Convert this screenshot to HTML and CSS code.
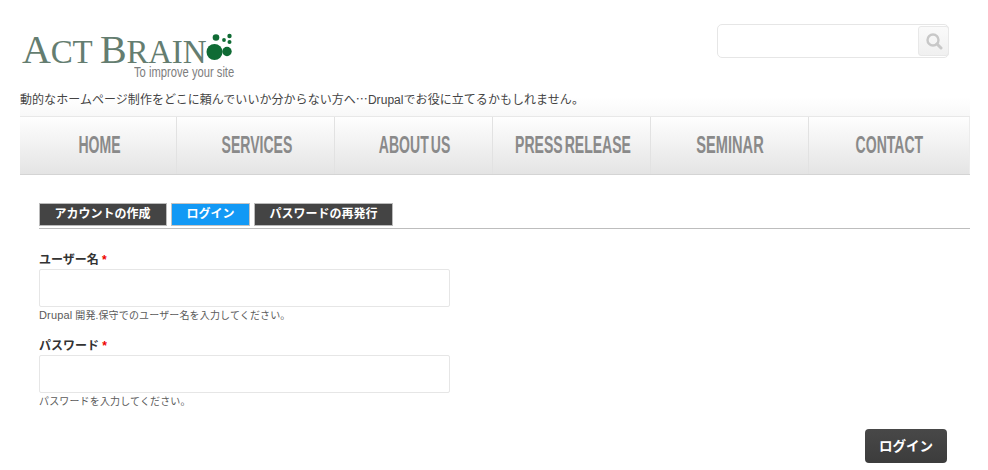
FILE: index.html
```html
<!DOCTYPE html>
<html lang="ja">
<head>
<meta charset="utf-8">
<title>ログイン</title>
<link rel="stylesheet" href="styles.css">
</head>
<body>
<div class="page">
  <header class="header">
    <div class="logo">
      <div class="logo-main">
        <span class="logo-text"><span class="cap">A</span>CT <span class="cap">B</span>RAIN</span>
        <svg class="logo-dots" width="27" height="27" viewBox="0 0 27 27">
          <circle cx="8.500" cy="19" r="8" fill="#0f6b34"/>
          <circle cx="21" cy="18.500" r="4.700" fill="#0f6b34"/>
          <circle cx="10" cy="4.500" r="3.300" fill="#0f6b34"/>
          <circle cx="18" cy="7" r="1.900" fill="#0f6b34"/>
          <circle cx="23.500" cy="3" r="2.200" fill="#0f6b34"/>
          <circle cx="23.500" cy="9" r="2" fill="#0f6b34"/>
        </svg>
      </div>
      <div class="logo-sub">To improve your site</div>
    </div>
    <form class="search">
      <button class="search-btn" type="button" aria-label="検索">
        <svg width="18" height="18" viewBox="0 0 18 18">
          <circle cx="8" cy="8" r="5.500" fill="none" stroke="#c8c8c8" stroke-width="2.400"/>
          <path d="M12 12l4 4" stroke="#c8c8c8" stroke-width="3" stroke-linecap="round"/>
        </svg>
      </button>
    </form>
  </header>
  <p class="tagline">動的なホームページ制作をどこに頼んでいいか分からない方へ<span class="ell">…</span>Drupalでお役に立てるかもしれません。</p>
  <nav class="nav">
    <a class="nav-item"><span class="nav-label">HOME</span></a>
    <a class="nav-item"><span class="nav-label">SERVICES</span></a>
    <a class="nav-item"><span class="nav-label">ABOUT US</span></a>
    <a class="nav-item"><span class="nav-label">PRESS RELEASE</span></a>
    <a class="nav-item"><span class="nav-label wide">SEMINAR</span></a>
    <a class="nav-item"><span class="nav-label">CONTACT</span></a>
  </nav>
  <main class="content">
    <ul class="tabs">
      <li class="tab">アカウントの作成</li>
      <li class="tab active">ログイン</li>
      <li class="tab">パスワードの再発行</li>
    </ul>
    <form class="form">
      <div class="field">
        <label class="label">ユーザー名 <span class="req">*</span></label>
        <input class="input" type="text">
        <div class="hint"><span class="latin">Drupal</span> 開発.保守でのユーザー名を入力してください。</div>
      </div>
      <div class="field">
        <label class="label">パスワード <span class="req">*</span></label>
        <input class="input" type="password">
        <div class="hint">パスワードを入力してください。</div>
      </div>
      <div class="actions">
        <button class="submit" type="button">ログイン</button>
      </div>
    </form>
  </main>
</div>
</body>
</html>
```
FILE: styles.css
```css
* { box-sizing: border-box; }
html, body { margin: 0; padding: 0; background: #fff; }
body {
  font-family: "Liberation Sans", "Noto Sans CJK JP", sans-serif;
  color: #444;
  height: 470px;
  overflow: hidden;
}
.page { width: 950px; margin-left: 20px; }
.header {
  height: 90px;
  display: flex;
  justify-content: space-between;
  align-items: flex-start;
}
.logo { margin: 29px 0 0 2px; width: 220px; }
.logo-main { display: flex; align-items: flex-start; height: 36px; }
.logo-text {
  font-family: "Liberation Serif", serif;
  font-size: 33px;
  line-height: 36px;
  height: 36px;
  margin-top: 3px;
  color: #647d70;
  letter-spacing: -0.2px;
  white-space: nowrap;
}
.logo-text .cap { font-size: 40px; }
.logo-dots { margin: 4px 0 0 0; }
.logo-sub {
  font-size: 14px;
  line-height: 14px;
  color: #7d7d7d;
  margin: 0 0 0 112px;
  white-space: nowrap;
  transform: scaleX(0.8);
  transform-origin: left center;
}
.search {
  width: 232px;
  height: 34px;
  margin: 24px 21px 0 0;
  border: 1px solid #e6e6e6;
  border-radius: 5px;
  background: #fff;
  display: flex;
  justify-content: flex-end;
  align-items: flex-start;
}
.search-btn {
  width: 31px;
  height: 30px;
  margin: 1px -1px 0 0;
  padding: 0;
  border: 1px solid #e8e8e8;
  border-radius: 3px;
  background: linear-gradient(#fafafa, #f0f0f0);
  display: flex;
  align-items: center;
  justify-content: center;
}
.tagline {
  margin: 0;
  height: 17px;
  font-size: 12px;
  line-height: 18px;
  letter-spacing: 0.05px;
  color: #444;
  white-space: nowrap;
  position: relative;
  z-index: 1;
}
.ell { font-family: "Noto Sans CJK JP", sans-serif; }
.nav {
  height: 59px;
  margin-top: 9px;
  display: flex;
  border-top: 1px solid #e8e8e8;
  border-bottom: 1px solid #d4d4d4;
  background: linear-gradient(#fefefe, #e4e4e4);
  position: relative;
}
.nav::before {
  content: "";
  position: absolute;
  left: 0;
  right: 0;
  top: -20px;
  height: 19px;
  background: linear-gradient(#fff, #f8f8f8);
}
.nav-item {
  width: 158px;
  padding: 0 0 1px 2px;
  display: flex;
  align-items: center;
  justify-content: center;
  border-right: 1px solid #e2e2e2;
}
.nav-item:first-child { width: 157px; }
.nav-item:last-child { width: 161px; padding-left: 0; border-right-color: #ececec; }
.nav-label {
  display: inline-block;
  font-weight: 700;
  font-size: 23px;
  color: #8a8a8a;
  white-space: nowrap;
  word-spacing: -3px;
  transform: scaleX(0.61);
}
.nav-label.wide { transform: scaleX(0.635); }
.content { padding: 28px 0 0 19px; }
.tabs {
  list-style: none;
  margin: 0;
  padding: 0 0 2px;
  height: 26px;
  display: flex;
  gap: 4px;
  border-bottom: 1px solid #bdbdbd;
}
.tab {
  height: 23px;
  padding: 0 14.500px;
  background: #444;
  border: 1px solid #bbb;
  color: #fff;
  font-size: 12px;
  font-weight: 700;
  line-height: 20px;
  white-space: nowrap;
}
.tab:first-child { padding-right: 15.500px; }
.tab.active { background: #1299f5; border-color: #c4c4c4; }
.form { padding-top: 22px; }
.field { margin-bottom: 14px; }
.label {
  display: block;
  font-size: 12px;
  font-weight: 700;
  line-height: 18px;
  color: #333;
}
.req { color: #e00; }
.input {
  display: block;
  width: 411px;
  height: 38px;
  margin: 0;
  border: 1px solid #e6e6e6;
  border-radius: 2px;
  background: #fff;
  outline: none;
}
.hint {
  font-size: 10px;
  line-height: 15px;
  margin-top: 1px;
  color: #5a5a5a;
  letter-spacing: 0.15px;
}
.latin { font-size: 11px; }
.actions { display: flex; justify-content: flex-end; padding: 6px 23px 0 0; }
.submit {
  width: 82px;
  height: 34px;
  padding: 0 0 3px;
  border: 0;
  border-radius: 4px;
  background: linear-gradient(#484848, #3c3c3c);
  color: #fff;
  font-family: inherit;
  font-size: 13.500px;
  font-weight: 700;
}
```
